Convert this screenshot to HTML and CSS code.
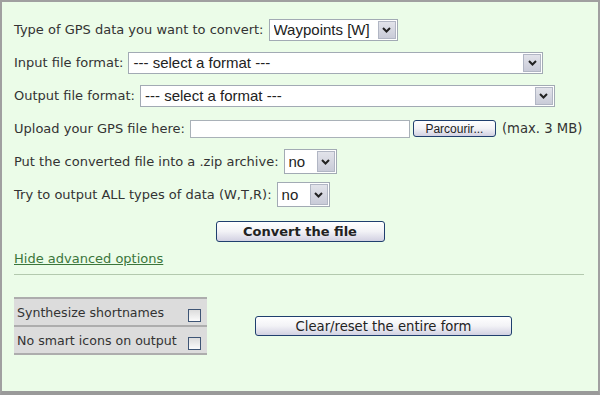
FILE: index.html
```html
<!DOCTYPE html>
<html lang="en">
<head>
  <meta charset="UTF-8" />
  <title>GPS file converter</title>
  <link rel="stylesheet" href="styles.css">
</head>
<body>
  <form class="panel">
    <!-- data type -->
    <div class="row">
      <label>Type of GPS data you want to convert:</label>
      <span class="dropdown dd-type">
        <select><option>Waypoints [W]</option></select>
        <span class="arrow"><svg width="9" height="6" viewBox="0 0 9 6"><polyline points="1,1 4.5,4.5 8,1" fill="none" stroke="#222" stroke-width="2"/></svg></span>
      </span>
    </div>

    <div class="row">
      <label>Input file format:</label>
      <span class="dropdown dd-format">
        <select><option>--- select a format ---</option></select>
        <span class="arrow"><svg width="9" height="6" viewBox="0 0 9 6"><polyline points="1,1 4.5,4.5 8,1" fill="none" stroke="#222" stroke-width="2"/></svg></span>
      </span>
    </div>

    <div class="row">
      <label>Output file format:</label>
      <span class="dropdown dd-format">
        <select><option>--- select a format ---</option></select>
        <span class="arrow"><svg width="9" height="6" viewBox="0 0 9 6"><polyline points="1,1 4.5,4.5 8,1" fill="none" stroke="#222" stroke-width="2"/></svg></span>
      </span>
    </div>

    <div class="row">
      <label>Upload your GPS file here:</label>
      <input type="text" class="file-path">
      <button type="button" class="xp-btn browse">Parcourir...</button>
      <span class="hint">(max. 3 MB)</span>
    </div>

    <div class="row">
      <label>Put the converted file into a .zip archive:</label>
      <span class="dropdown dd-small">
        <select><option>no</option></select>
        <span class="arrow"><svg width="9" height="6" viewBox="0 0 9 6"><polyline points="1,1 4.5,4.5 8,1" fill="none" stroke="#222" stroke-width="2"/></svg></span>
      </span>
    </div>

    <div class="row">
      <label>Try to output ALL types of data (W,T,R):</label>
      <span class="dropdown dd-small">
        <select><option>no</option></select>
        <span class="arrow"><svg width="9" height="6" viewBox="0 0 9 6"><polyline points="1,1 4.5,4.5 8,1" fill="none" stroke="#222" stroke-width="2"/></svg></span>
      </span>
    </div>

    <div class="submit-row">
      <button type="button" class="xp-btn convert">Convert the file</button>
    </div>

    <a href="#" class="toggle">Hide advanced options</a>
    <hr>

    <!-- advanced options -->
    <div class="advanced">
      <table class="opts">
        <tr>
          <td>Synthesize shortnames</td>
          <td><input type="checkbox"></td>
        </tr>
        <tr>
          <td>No smart icons on output</td>
          <td><input type="checkbox"></td>
        </tr>
      </table>
      <button type="reset" class="xp-btn reset">Clear/reset the entire form</button>
    </div>
  </form>
</body>
</html>
```

FILE: styles.css
```css
* {
  box-sizing: border-box;
}
body {
  margin: 0;
  font-family: "DejaVu Sans", Verdana, sans-serif;
  font-size: 13px;
  color: #333;
}
.panel {
  width: 600px;
  height: 395px;
  background: #ebfce8;
  border: 2px solid #a0a0a0;
  border-bottom: 4px solid #9a9a9a;
  padding: 11px 12px 0 12px;
  margin: 0;
}
.row {
  display: flex;
  align-items: center;
  gap: 5px;
  height: 33px;
}
.dropdown {
  display: inline-flex;
  align-items: stretch;
  height: 22px;
  background: #fff;
  border: 1px solid #a2aab4;
}
.dropdown select {
  appearance: none;
  -webkit-appearance: none;
  border: none;
  outline: none;
  background: transparent;
  flex: 1;
  min-width: 0;
  padding: 0 0 0 4px;
  font-family: "Liberation Sans", Arial, sans-serif;
  font-size: 15px;
  color: #222;
}
.arrow {
  width: 18px;
  margin: 1px;
  display: flex;
  align-items: center;
  justify-content: center;
  border: 1px solid #b1b6c4;
  background: linear-gradient(#e2e3ea, #c9cbd8);
}
.dd-type {
  width: 129px;
}
.dd-format {
  width: 415px;
}
.dd-small {
  width: 53px;
  height: 25px;
}
.file-path {
  width: 220px;
  height: 18px;
  border: 1px solid #a9b1b8;
  background: #fff;
  margin: 0;
}
.xp-btn {
  font-family: "DejaVu Sans", Verdana, sans-serif;
  color: #222;
  border: 1px solid #1f3f6e;
  border-radius: 3px;
  background: linear-gradient(#ffffff 0%, #f2f2f6 50%, #d2d1e2 100%);
  padding: 0;
  margin: 0;
  cursor: pointer;
}
.browse {
  width: 83px;
  height: 17px;
  margin-left: -2px;
  font-family: "Liberation Sans", Arial, sans-serif;
  font-size: 12px;
}
.hint {
  margin-left: 1px;
  font-size: 13.2px;
}
.submit-row {
  display: flex;
  justify-content: center;
  align-items: center;
  height: 40px;
}
.convert {
  width: 169px;
  height: 21px;
  font-size: 13px;
  font-weight: bold;
}
.toggle {
  display: block;
  line-height: 16px;
  color: #3b763b;
  width: fit-content;
}
hr {
  border: none;
  border-top: 1px solid #b3c9ae;
  margin: 7px 2px 0 0;
}
.advanced {
  display: flex;
  align-items: center;
  margin-top: 22px;
}
.opts {
  border-collapse: collapse;
  width: 193px;
  background: #dcdcdc;
  font-size: 12.6px;
}
.opts td {
  height: 28px;
  padding: 0 0 0 3px;
  border-top: 2px solid #adadad;
  border-bottom: 2px solid #adadad;
  white-space: nowrap;
}
.opts td + td {
  padding: 0 6px 0 0;
  text-align: right;
}
.opts input {
  appearance: none;
  -webkit-appearance: none;
  width: 13px;
  height: 13px;
  margin: 6px 0 0 0;
  border: 1px solid #3e5575;
  background: linear-gradient(#dcdcdc, #fbfbfb);
  vertical-align: middle;
}
.reset {
  width: 257px;
  height: 20px;
  margin-left: 48px;
  font-size: 13.2px;
}
```
